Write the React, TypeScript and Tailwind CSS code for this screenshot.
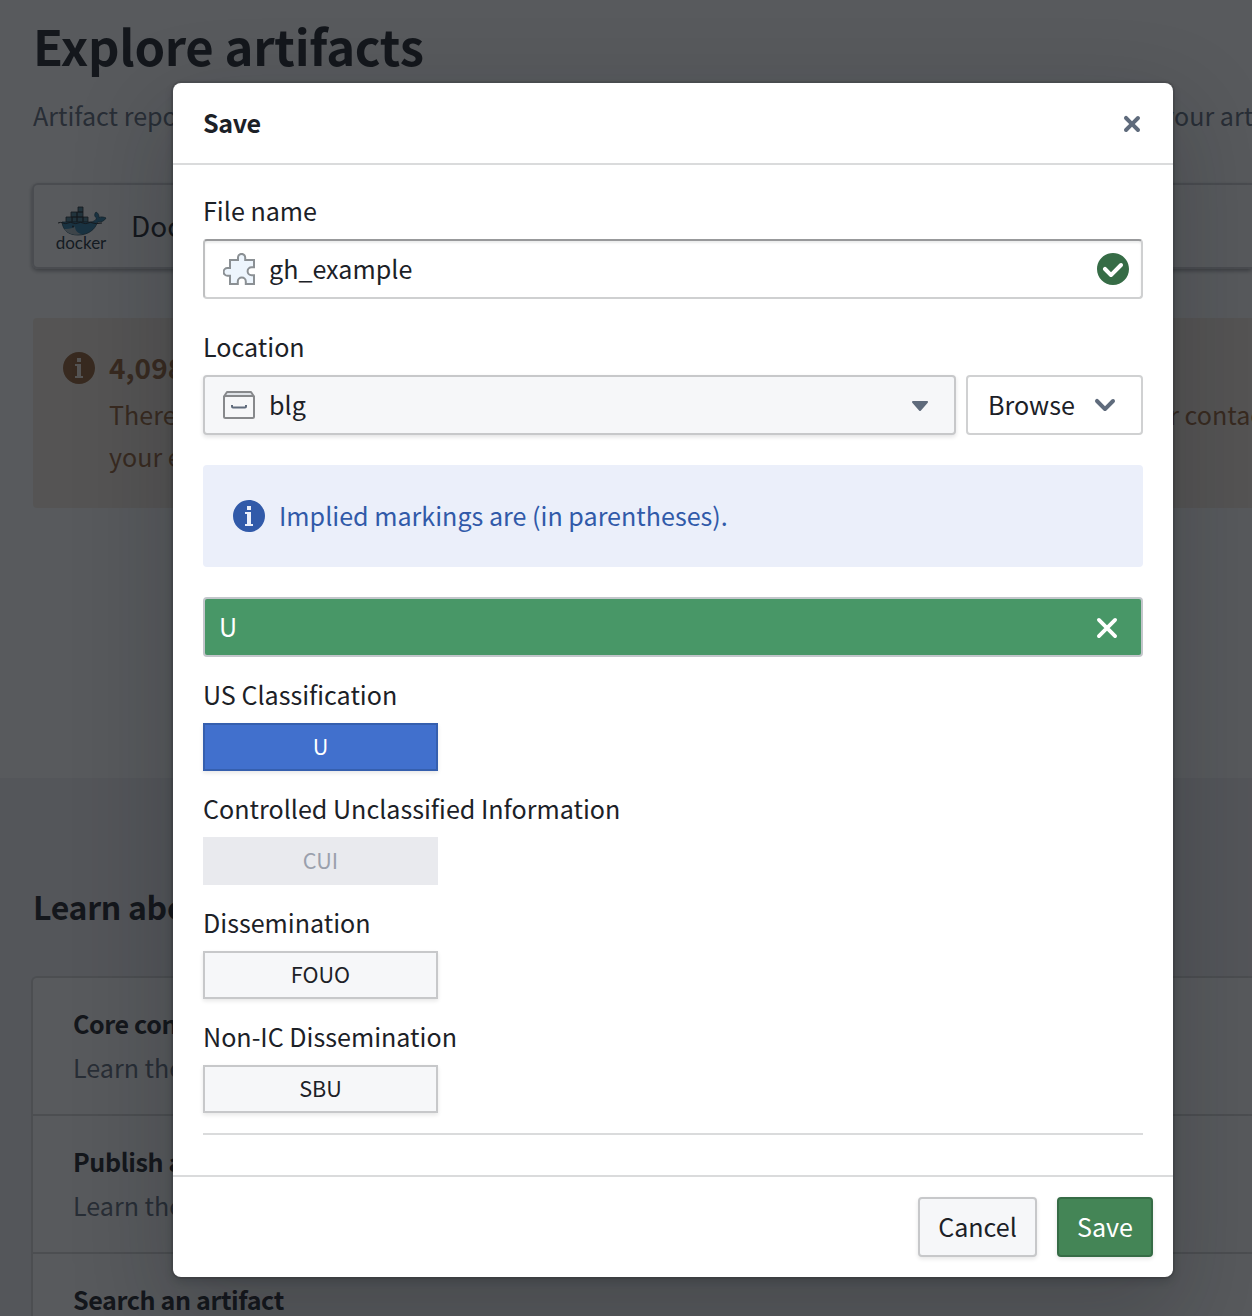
import React from "react";

const INFO =
  "M8 0C3.58 0 0 3.58 0 8s3.58 8 8 8 8-3.58 8-8-3.58-8-8-8zM7 3h2v2H7V3zm3 10H6v-1h1V7H6V6h3v6h1v1z";
const TICK_CIRCLE =
  "M8 16c-4.42 0-8-3.58-8-8s3.58-8 8-8 8 3.58 8 8-3.58 8-8 8zm4-11c-.28 0-.53.11-.71.29L7 9.59l-2.29-2.3a1.003 1.003 0 00-1.42 1.42l3 3c.18.18.43.29.71.29s.53-.11.71-.29l5-5A1.003 1.003 0 0012 5z";
const SMALL_CROSS =
  "M9.41 8l2.29-2.29c.19-.18.3-.43.3-.71a1.003 1.003 0 00-1.71-.71L8 6.59l-2.29-2.3a1.003 1.003 0 00-1.42 1.42L6.59 8 4.3 10.29c-.19.18-.3.43-.3.71a1.003 1.003 0 001.71.71L8 9.41l2.29 2.29c.18.19.43.3.71.3a1.003 1.003 0 00.71-1.71L9.41 8z";
const CHEVRON =
  "M12 5c-.28 0-.53.11-.71.29L8 8.59l-3.29-3.3a1.003 1.003 0 00-1.42 1.42l4 4c.18.18.43.29.71.29s.53-.11.71-.29l4-4A1.003 1.003 0 0012 5z";
const CARET =
  "M12 6.5c0-.28-.22-.5-.5-.5h-7a.495.495 0 00-.37.83l3.5 4c.09.1.22.17.37.17s.28-.07.37-.17l3.5-4c.08-.09.13-.2.13-.33z";

function Glyph({ d, className = "" }: { d: string; className?: string }) {
  return (
    <svg viewBox="0 0 16 16" className={`size-8 shrink-0 ${className}`} fill="currentColor">
      <path fillRule="evenodd" clipRule="evenodd" d={d} />
    </svg>
  );
}

function Puzzle() {
  return (
    <svg viewBox="0 0 32 32" className="size-8 shrink-0" fill="#edf5fd" stroke="#8b9094" strokeWidth="2">
      <path d="M7 7H15V4.5a3.6 3.6 0 0 1 7.2 0V7H31V14.3H28.600a4 4 0 0 0 0 8H31V31H22.800V28.500a4 4 0 0 0-8 0V31H7V22.800H4.500a3.700 3.700 0 0 1 0-7.800H7Z" />
    </svg>
  );
}

function Drawer() {
  return (
    <svg viewBox="0 0 32 32" className="size-8 shrink-0" fill="none" strokeWidth="2">
      <path d="M4 3H28L31 7.500H1Z" fill="#dfe3e8" stroke="#87898c" strokeLinejoin="round" />
      <rect x="1" y="7" width="30" height="22" rx="1.500" fill="#f6f7f9" stroke="#87898c" />
      <path d="M9 16v1.500q0 .9 1 .9H22q1 0 1-.9V16" stroke="#5f6b7c" />
    </svg>
  );
}

function DockerLogo() {
  return (
    <div className="flex w-[52px] shrink-0 flex-col items-center pt-1">
      <svg viewBox="0 0 52 31" className="h-[31px] w-[52px]">
        <g fill="#4b7f93" stroke="#20272c" strokeWidth=".8">
          <path d="M11 11h6v5h-6zM17 11h5v5h-5zM22 11h6v5h-6zM28 11h5v5h-5zM16 6h6v5h-6zM22 6h6v5h-6zM23 1h5v5h-5z" />
        </g>
        <path
          d="M7 16H35C39 16 41 14 41.500 12C38.500 10 40 7 41 6C43.500 7 44 9.500 44 11.500C46 10.500 49 11 51 12C49.500 15 46 16.500 42.500 16C40 24 33 29 23 29C14 29 8 25 7 16Z"
          fill="#2f7ea6"
          stroke="#1c4557"
          strokeWidth=".8"
        />
        <path d="M9 23C14 23.500 18 22 20 20.500C20 24 22 27 27 28.300C18 30 12 27 9 23Z" fill="#a9b9c0" />
        <path d="M3 17q2.500-1.200 5 0t5 0 5 0 5 0 5 0 5 0 5 0 9 0" fill="none" stroke="#20272c" strokeWidth="1" />
        <circle cx="18" cy="20.500" r="1" fill="#20272c" />
      </svg>
      <span className="mt-[-1px] font-['Lato',sans-serif] text-[17px] leading-[14px] text-[#20303a]">docker</span>
    </div>
  );
}

function ListItem({ title, text }: { title: string; text: string }) {
  return (
    <div className="flex h-[138px] flex-col gap-2 border-b-2 border-[#d5d6d8] pt-[27px] pl-10">
      <div className="leading-9 font-bold tracking-[-.4px]">{title}</div>
      <div className="leading-9 text-[#5f6b7c]">{text}</div>
    </div>
  );
}

function Page() {
  return (
    <div className="flex h-full flex-col overflow-hidden whitespace-nowrap">
      <div className="h-[778px] shrink-0 pl-[33px]">
        <h1 className="pt-[13px] text-[49px] leading-[64px] font-bold tracking-[-.25px]">Explore artifacts</h1>
        <div className="mt-5 flex leading-9 text-[#5f6b7c]">
          <span className="w-[1128px] shrink-0">Artifact repositories</span>
          <span>your artifacts</span>
        </div>
        <div className="mt-[50px] -ml-px flex h-[86px] items-center gap-6 rounded-l-md border-2 border-r-0 border-[#cfd0d2] pl-[21px] text-[28px] shadow-[0_2px_4px_rgba(17,20,24,.4)]">
          <DockerLogo />
          <span className="-mt-0.5">Docker</span>
        </div>
        <div className="mt-[49px] flex h-[190px] gap-[14px] rounded-l bg-[#f4ece0] pt-[28px] pl-[30px] text-[#935f35]">
          <Glyph d={INFO} className="mt-[6px]" />
          <div className="flex flex-col">
            <span className="text-[28px] leading-[42px] font-bold">4,098</span>
            <div className="mt-[5px] flex leading-[42px]">
              <span className="w-[1045px] shrink-0">There</span>
              <span>or contact</span>
            </div>
            <span className="leading-[42px]">your environment</span>
          </div>
        </div>
      </div>
      <div className="grow bg-[#f0f1f3] pt-[104px] pl-[31px]">
        <h2 className="pl-0.5 text-[32px] leading-[48px] font-bold tracking-[-.3px]">Learn about artifacts</h2>
        <div className="mt-[46px] rounded-tl-md border-2 border-r-0 border-b-0 border-[#d5d6d8] bg-white">
          <ListItem title="Core concepts" text="Learn the basics" />
          <ListItem title="Publish an artifact" text="Learn the steps" />
          <ListItem title="Search an artifact" text="Learn the tools" />
        </div>
      </div>
    </div>
  );
}

function Label({ children }: { children: React.ReactNode }) {
  return <div className="h-9 leading-9">{children}</div>;
}

const markings = [
  { label: "US Classification", code: "U", look: "border-2 border-[#355fae] bg-[#4170cd] text-white shadow-[0_2px_4px_rgba(17,20,24,.1)]" },
  { label: "Controlled Unclassified Information", code: "CUI", look: "bg-[#e9eaee] text-[#9aa0ac]" },
  { label: "Dissemination", code: "FOUO", look: "border-2 border-[#c7c8ca] bg-[#f6f7f9] shadow-[0_2px_4px_rgba(17,20,24,.1)]" },
  { label: "Non-IC Dissemination", code: "SBU", look: "border-2 border-[#c7c8ca] bg-[#f6f7f9] shadow-[0_2px_4px_rgba(17,20,24,.1)]" },
];

function SaveDialog() {
  return (
    <div className="flex h-[1194px] w-[1000px] flex-col rounded-lg bg-white shadow-[0_0_0_2px_rgba(17,20,24,.1),0_4px_8px_rgba(17,20,24,.2),0_36px_92px_12px_rgba(17,20,24,.2)]">
      <header className="flex h-[82px] items-center justify-between border-b-2 border-[#dadbdc] pr-[25px] pl-[30px]">
        <h2 className="font-bold tracking-[-.4px]">Save</h2>
        <button className="pt-0.5">
          <Glyph d={SMALL_CROSS} className="text-[#5f6b7c]" />
        </button>
      </header>
      <main className="flex grow flex-col px-[30px] pt-[27px]">
        <Label>File name</Label>
        <div className="mt-[11px] flex h-[60px] items-center rounded border-2 border-t-[#98999b] border-r-[#cfd0d1] border-b-[#cfd0d1] border-l-[#bfc0c1] pr-3 pl-[18px] shadow-[inset_0_2px_2px_rgba(17,20,24,.08)]">
          <Puzzle />
          <span className="ml-[14px] grow">gh_example</span>
          <Glyph d={TICK_CIRCLE} className="text-[#366c46]" />
        </div>
        <div className="mt-[29px]">
          <Label>Location</Label>
        </div>
        <div className="mt-[11px] flex gap-[10px]">
          <button className="flex h-[60px] grow items-center rounded border-2 border-[#c7c8ca] bg-[#f6f7f9] pr-[18px] pl-[18px] text-left shadow-[0_2px_4px_rgba(17,20,24,.12)]">
            <Drawer />
            <span className="ml-[14px] grow">blg</span>
            <Glyph d={CARET} className="text-[#5f6b7c]" />
          </button>
          <button className="flex h-[60px] w-[177px] items-center justify-between rounded border-2 border-[#d0d1d2] pr-5 pl-5">
            <span>Browse</span>
            <Glyph d={CHEVRON} className="text-[#5f6b7c]" />
          </button>
        </div>
        <div className="mt-[30px] flex h-[102px] items-center gap-[14px] rounded bg-[#ebeffa] pl-[30px] text-[#315aa9]">
          <Glyph d={INFO} />
          <span>Implied markings are (in parentheses).</span>
        </div>
        <div className="mt-[30px] flex h-[60px] items-center justify-between rounded border-2 border-[#c3c6cb] bg-[#489767] pr-[22px] pl-[14px] text-white">
          <span>U</span>
          <svg viewBox="0 0 24 24" className="mt-0.5 size-6" fill="none" stroke="currentColor" strokeWidth="3.8" strokeLinecap="round">
            <path d="M3.900 3.900 20.100 20.100M20.100 3.900 3.900 20.100" />
          </svg>
        </div>
        <div className="mt-[19px] flex flex-col gap-[19px]">
          {markings.map((m) => (
            <div key={m.label} className="flex flex-col gap-[11px]">
              <Label>{m.label}</Label>
              <button className={`flex h-12 w-[235px] items-center justify-center pb-0.5 text-[21.6px] ${m.look}`}>{m.code}</button>
            </div>
          ))}
        </div>
        <hr className="mt-5 border-t-2 border-[#dadbdc]" />
      </main>
      <footer className="flex h-[102px] justify-end gap-5 border-t-2 border-[#dadbdc] p-5">
        <button className="h-[60px] w-[119px] rounded border-2 border-[#c7c8ca] bg-[#f6f7f9] shadow-[0_2px_4px_rgba(17,20,24,.1)]">Cancel</button>
        <button className="h-[60px] w-24 rounded border-2 border-[#366c46] bg-[#448556] text-white shadow-[0_2px_4px_rgba(17,20,24,.1)]">Save</button>
      </footer>
    </div>
  );
}

export default function App() {
  return (
    <div className="relative h-[1316px] w-[1252px] overflow-hidden bg-white font-['Noto_Sans_CJK_SC',sans-serif] text-[25.1px] text-[#1c2127]">
      <Page />
      <div className="absolute inset-0 bg-[rgba(17,20,24,.7)] pt-[83px] pl-[173px]">
        <SaveDialog />
      </div>
    </div>
  );
}
